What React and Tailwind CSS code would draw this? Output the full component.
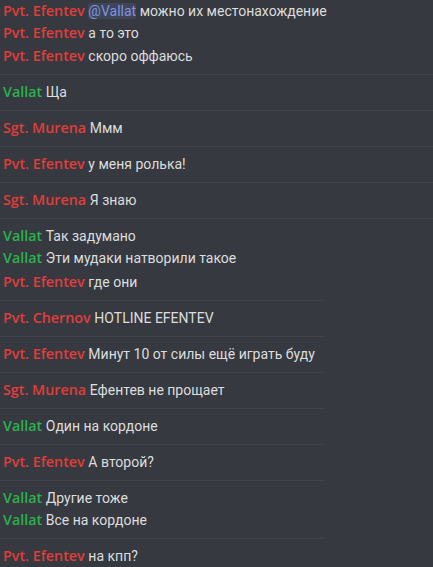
import React from "react";

const RED = "text-[#e13d3b]";
const GREEN = "text-[#2bb14e]";

const Line = ({ name, color, children, extra = "" }) => (
  <div className={`h-[22px] leading-[22px] whitespace-nowrap pl-[3px] ${extra}`}>
    <span
      className={`font-semibold text-[14.3px] ${color}`}
      style={{ fontFamily: '"Open Sans", "Noto Sans", sans-serif' }}
    >
      {name}
    </span>{" "}
    <span
      className="text-[#dcddde] text-[14px]"
      style={{ fontFamily: 'Roboto, "Noto Sans", sans-serif' }}
    >
      {children}
    </span>
  </div>
);

const Group = ({ children, wide = true, first = false, pb = "pb-[7px]" }) => (
  <div>
    <div className={`${first ? "" : "pt-[6px]"} ${pb}`}>{children}</div>
    <div className={`h-px bg-[#40434a] ${wide ? "w-full" : "w-[324px]"}`} />
  </div>
);

export default function App() {
  return (
    <div className="w-[433px] h-[567px] overflow-hidden bg-[#36393f] text-[14px]">
      <Group first>
        <Line name="Pvt. Efentev" color={RED}>
          <span className="text-[#7f95e0] bg-[#3f4457] rounded-[2px]">@Vallat</span> можно их местонахождение
        </Line>
        <Line name="Pvt. Efentev" color={RED}>а то это</Line>
        <Line name="Pvt. Efentev" color={RED} extra="mt-px">скоро оффаюсь</Line>
      </Group>
      <Group>
        <Line name="Vallat" color={GREEN}>Ща</Line>
      </Group>
      <Group>
        <Line name="Sgt. Murena" color={RED}>Ммм</Line>
      </Group>
      <Group>
        <Line name="Pvt. Efentev" color={RED}>у меня ролька!</Line>
      </Group>
      <Group>
        <Line name="Sgt. Murena" color={RED}>Я знаю</Line>
      </Group>
      <Group wide={false}>
        <Line name="Vallat" color={GREEN}>Так задумано</Line>
        <Line name="Vallat" color={GREEN}>Эти мудаки натворили такое</Line>
        <Line name="Pvt. Efentev" color={RED} extra="mt-[2px]">где они</Line>
      </Group>
      <Group wide={false}>
        <Line name="Pvt. Chernov" color={RED}>HOTLINE EFENTEV</Line>
      </Group>
      <Group wide={false}>
        <Line name="Pvt. Efentev" color={RED}>Минут 10 от силы ещё играть буду</Line>
      </Group>
      <Group wide={false}>
        <Line name="Sgt. Murena" color={RED}>Ефентев не прощает</Line>
      </Group>
      <Group wide={false}>
        <Line name="Vallat" color={GREEN}>Один на кордоне</Line>
      </Group>
      <Group wide={false}>
        <Line name="Pvt. Efentev" color={RED}>А второй?</Line>
      </Group>
      <Group wide={false}>
        <Line name="Vallat" color={GREEN}>Другие тоже</Line>
        <Line name="Vallat" color={GREEN}>Все на кордоне</Line>
      </Group>
      <Group wide={false}>
        <Line name="Pvt. Efentev" color={RED}>на кпп?</Line>
      </Group>
    </div>
  );
}
